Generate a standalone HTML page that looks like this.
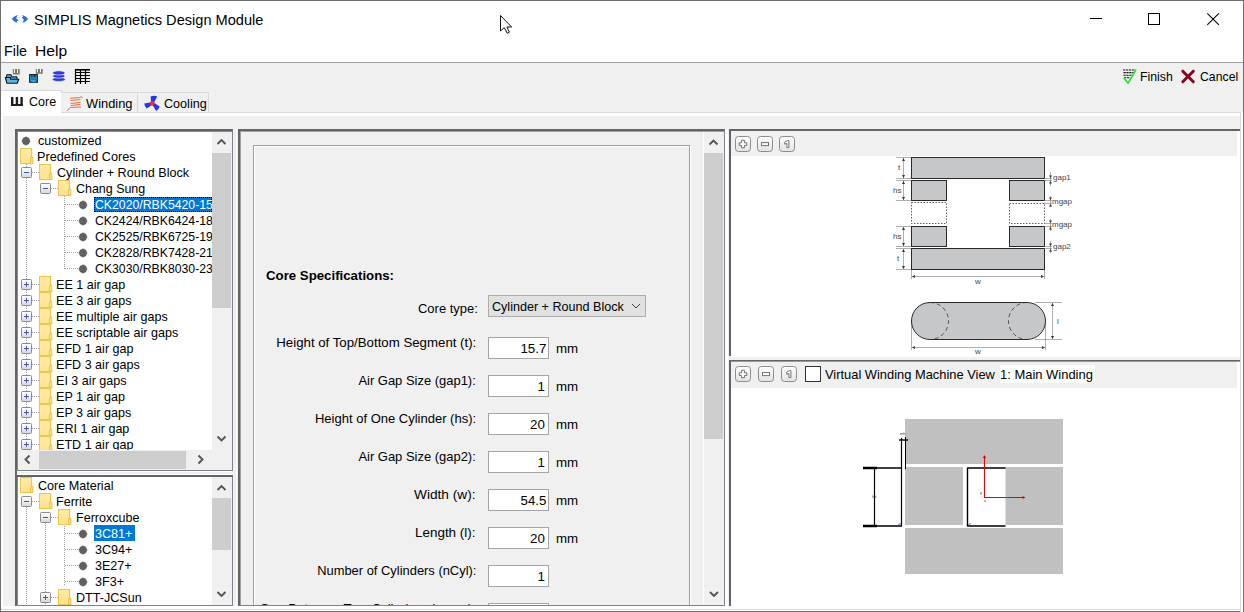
<!DOCTYPE html>
<html><head><meta charset="utf-8">
<style>
*{margin:0;padding:0;box-sizing:border-box}
html,body{width:1244px;height:612px;overflow:hidden;background:#f0f0f0;font-family:"Liberation Sans",sans-serif;color:#000}
.a{position:absolute}
.t{position:absolute;white-space:nowrap;line-height:1}
svg{position:absolute;overflow:visible}
</style></head><body>
<div class="a" style="left:0px;top:0px;width:1244px;height:612px;border:1px solid #6e6e6e;background:#f0f0f0"></div>
<div class="a" style="left:1px;top:1px;width:1242px;height:61px;background:#fff"></div>
<div class="a" style="left:1px;top:62px;width:1242px;height:1px;background:#a0a0a0"></div>
<svg style="left:0;top:0" width="40" height="40">
<path d="M17.8 15 C15 16 12.5 17.5 11.9 19 C12.5 20.5 15 22 17.8 23 L16.6 21.3 L18.8 20.4 L16.2 18.6 L16.9 16.4 Z" fill="#2a6ed8"/>
<path d="M22.1 15 C25 16 27.4 17.5 28 19 C27.4 20.5 25 22 22.1 23 L23.3 21.3 L23.8 19.4 L21.8 17.6 L23 16.4 Z" fill="#2a6ed8"/>
</svg>
<div id="title" class="t" style="left:33.70px;transform-origin:0 0;top:12.18px;font-size:15.5px;color:#000;transform:scaleX(0.9409)">SIMPLIS Magnetics Design Module</div>
<div class="a" style="left:1090px;top:18px;width:12px;height:1px;background:#000"></div>
<div class="a" style="left:1148px;top:13px;width:12px;height:12px;border:1px solid #000"></div>
<svg style="left:1207px;top:13px" width="13" height="13" viewBox="0 0 13 13">
<path d="M0.3 0.3 L11.9 11.9 M11.9 0.3 L0.3 11.9" stroke="#000" stroke-width="1.05"/></svg>
<div id="file" class="t" style="left:4.10px;transform-origin:0 0;top:42.58px;font-size:15.5px;color:#000;transform:scaleX(0.9217)">File</div>
<div id="help" class="t" style="left:35.00px;transform-origin:0 0;top:42.58px;font-size:15.5px;color:#000;transform:scaleX(1.0067)">Help</div>
<div id="finish" class="t" style="left:1139.50px;transform-origin:0 0;top:69.90px;font-size:13px;color:#000;transform:scaleX(0.9441)">Finish</div>
<div id="cancel" class="t" style="left:1199.70px;transform-origin:0 0;top:69.90px;font-size:13px;color:#000;transform:scaleX(0.9436)">Cancel</div>
<div class="a" style="left:1px;top:90px;width:61px;height:26px;background:#fff;border-top:1px solid #d9d9d9;border-right:1px solid #d9d9d9"></div>
<div class="a" style="left:61px;top:92px;width:77px;height:21px;background:#f0f0f0;border:1px solid #d9d9d9;border-bottom:none;border-left:none"></div>
<div class="a" style="left:137px;top:92px;width:72px;height:21px;background:#f0f0f0;border:1px solid #d9d9d9;border-bottom:none"></div>
<div class="a" style="left:61px;top:112px;width:1180px;height:1px;background:#d9d9d9"></div>
<div class="a" style="left:1px;top:113px;width:1240px;height:3px;background:#fff"></div>
<div class="a" style="left:1px;top:116px;width:2px;height:493px;background:#fff"></div>
<div class="a" style="left:1px;top:606px;width:1240px;height:3px;background:#fff"></div>
<div class="a" style="left:1px;top:609px;width:1240px;height:1px;background:#d9d9d9"></div>
<div class="a" style="left:1px;top:610px;width:1242px;height:1px;background:#fff"></div>
<div class="a" style="left:236px;top:129px;width:1px;height:477px;background:#fff"></div>
<div class="a" style="left:725px;top:129px;width:3px;height:477px;background:#fff"></div>
<div class="a" style="left:17px;top:471px;width:215px;height:4px;background:#f0f0f0;border-top:1px solid #fff;border-bottom:1px solid #fff"></div>
<div class="a" style="left:15px;top:471px;width:2px;height:4px;background:#646464"></div>
<div class="a" style="left:1240px;top:112px;width:1px;height:500px;background:#d9d9d9"></div>
<div class="a" style="left:1241px;top:112px;width:2px;height:500px;background:#fff"></div>
<div id="tcore" class="t" style="left:28.70px;transform-origin:0 0;top:94.90px;font-size:13px;color:#000;transform:scaleX(0.9630)">Core</div>
<div id="twind" class="t" style="left:86.30px;transform-origin:0 0;top:96.70px;font-size:13px;color:#000;transform:scaleX(0.9891)">Winding</div>
<div id="tcool" class="t" style="left:164.00px;transform-origin:0 0;top:96.70px;font-size:13px;color:#000;transform:scaleX(0.9690)">Cooling</div>
<div class="a" style="left:15px;top:129px;width:218px;height:342px;background:#fff;border-top:2px solid #646464;border-left:2px solid #646464;border-right:1px solid #7c838c;border-bottom:1px solid #7c838c"></div>
<div class="a" style="left:17px;top:131px;width:215px;height:1px;background:#8a8a8a"></div>
<div class="a" style="left:17px;top:131px;width:1px;height:339px;background:#8a8a8a"></div>
<div class="a" style="left:15px;top:475px;width:218px;height:131px;background:#fff;border-top:2px solid #646464;border-left:2px solid #646464;border-right:1px solid #7c838c;border-bottom:1px solid #7c838c"></div>
<div class="a" style="left:17px;top:477px;width:1px;height:128px;background:#8a8a8a"></div>
<div class="a" style="left:238px;top:129px;width:487px;height:477px;background:#f0f0f0;border-top:2px solid #646464;border-left:2px solid #646464;border-right:1px solid #7c838c;border-bottom:1px solid #7c838c"></div>
<div class="a" style="left:240px;top:131px;width:484px;height:1px;background:#a0a0a0"></div>
<div class="a" style="left:240px;top:131px;width:1px;height:474px;background:#a0a0a0"></div>
<div class="a" style="left:731px;top:131px;width:509px;height:226px;background:#fff"></div>
<div class="a" style="left:729px;top:129px;width:511px;height:2px;background:#646464"></div>
<div class="a" style="left:729px;top:129px;width:2px;height:227px;background:#646464"></div>
<div class="a" style="left:731px;top:131px;width:506px;height:25px;background:#f0f0f0"></div>
<div class="a" style="left:729px;top:357px;width:511px;height:3px;background:#f0f0f0"></div>
<div class="a" style="left:731px;top:361px;width:509px;height:248px;background:#fff"></div>
<div class="a" style="left:729px;top:360px;width:511px;height:1px;background:#646464"></div>
<div class="a" style="left:729px;top:361px;width:511px;height:1px;background:#9a9a9a"></div>
<div class="a" style="left:729px;top:360px;width:2px;height:246px;background:#646464"></div>
<div class="a" style="left:731px;top:362px;width:506px;height:26px;background:#f0f0f0"></div>
<svg width="0" height="0" style="left:0;top:0"><defs>
<linearGradient id="fg" x1="0" y1="0" x2="0" y2="1"><stop offset="0" stop-color="#feeaa6"/><stop offset="1" stop-color="#fde38a"/></linearGradient>
<linearGradient id="bg" x1="0" y1="0" x2="0" y2="1"><stop offset="0" stop-color="#ffffff"/><stop offset="1" stop-color="#d8d8d8"/></linearGradient>
<linearGradient id="btn" x1="0" y1="0" x2="0" y2="1"><stop offset="0" stop-color="#ffffff"/><stop offset="1" stop-color="#e2e2e2"/></linearGradient>
</defs></svg>
<div class="a" style="left:18px;top:132px;width:194px;height:318px;overflow:hidden">
<div class="a" style="left:-18px;top:-132px;width:1244px;height:612px">
<div class="a" style="left:26px;top:164px;width:1px;height:286px;background-image:linear-gradient(to bottom,#a0a0a0 50%,transparent 50%);background-size:1px 2px"></div>
<div class="a" style="left:64px;top:196px;width:1px;height:73px;background-image:linear-gradient(to bottom,#a0a0a0 50%,transparent 50%);background-size:1px 2px"></div>
<svg style="left:20.5px;top:135.5px" width="10" height="10" viewBox="0 0 10 10"><circle cx="5" cy="5" r="3.9" fill="#606060"/><path d="M5 0.6 V9.4 M0.6 5 H9.4" stroke="#606060" stroke-width="1.2"/></svg>
<div id="tr1_0" class="t" style="left:37.50px;transform-origin:0 0;top:134.00px;font-size:13px;color:#000;transform:scaleX(0.9662)">customized</div>
<svg style="left:20px;top:148px" width="14" height="16" viewBox="0 0 14 16">
<rect x="0.6" y="0.6" width="11" height="15" fill="#fde694" stroke="#ebc54c" stroke-width="1.1"/>
<rect x="1.2" y="1.2" width="9.8" height="13.8" fill="url(#fg)"/>
<path d="M10.6 15.4 V10.2 Q10.6 9.4 11.5 9.4 H12 Q12.9 9.4 12.9 10.2 V15.4 Z" fill="#fde694" stroke="#ebc54c" stroke-width="1.1"/>
</svg>
<div id="tr1_1" class="t" style="left:37.10px;transform-origin:0 0;top:150.00px;font-size:13px;color:#000;transform:scaleX(0.9740)">Predefined Cores</div>
<svg style="left:21px;top:167px" width="11" height="11" viewBox="0 0 11 11">
<rect x="0.5" y="0.5" width="10" height="10" rx="1" fill="url(#bg)" stroke="#8a8a8a"/>
<path d="M3 5.5 H8" stroke="#3e5aa8" stroke-width="1"/></svg>
<div class="a" style="left:32px;top:172px;width:7px;height:1px;background-image:linear-gradient(to right,#a0a0a0 50%,transparent 50%);background-size:2px 1px"></div>
<svg style="left:39px;top:164px" width="14" height="16" viewBox="0 0 14 16">
<rect x="0.6" y="0.6" width="11" height="15" fill="#fde694" stroke="#ebc54c" stroke-width="1.1"/>
<rect x="1.2" y="1.2" width="9.8" height="13.8" fill="url(#fg)"/>
<path d="M10.6 15.4 V10.2 Q10.6 9.4 11.5 9.4 H12 Q12.9 9.4 12.9 10.2 V15.4 Z" fill="#fde694" stroke="#ebc54c" stroke-width="1.1"/>
</svg>
<div id="tr1_2" class="t" style="left:57.30px;transform-origin:0 0;top:166.00px;font-size:13px;color:#000;transform:scaleX(0.9696)">Cylinder + Round Block</div>
<svg style="left:40px;top:183px" width="11" height="11" viewBox="0 0 11 11">
<rect x="0.5" y="0.5" width="10" height="10" rx="1" fill="url(#bg)" stroke="#8a8a8a"/>
<path d="M3 5.5 H8" stroke="#3e5aa8" stroke-width="1"/></svg>
<div class="a" style="left:51px;top:188px;width:7px;height:1px;background-image:linear-gradient(to right,#a0a0a0 50%,transparent 50%);background-size:2px 1px"></div>
<svg style="left:58px;top:180px" width="14" height="16" viewBox="0 0 14 16">
<rect x="0.6" y="0.6" width="11" height="15" fill="#fde694" stroke="#ebc54c" stroke-width="1.1"/>
<rect x="1.2" y="1.2" width="9.8" height="13.8" fill="url(#fg)"/>
<path d="M10.6 15.4 V10.2 Q10.6 9.4 11.5 9.4 H12 Q12.9 9.4 12.9 10.2 V15.4 Z" fill="#fde694" stroke="#ebc54c" stroke-width="1.1"/>
</svg>
<div id="tr1_3" class="t" style="left:75.50px;transform-origin:0 0;top:182.00px;font-size:13px;color:#000;transform:scaleX(0.9577)">Chang Sung</div>
<div class="a" style="left:94px;top:197px;width:118px;height:15px;background:#0078d7;outline:1px dotted #000;outline-offset:-1px"></div>
<div class="a" style="left:65px;top:204px;width:13px;height:1px;background-image:linear-gradient(to right,#a0a0a0 50%,transparent 50%);background-size:2px 1px"></div>
<svg style="left:77.6px;top:199.5px" width="10" height="10" viewBox="0 0 10 10"><circle cx="5" cy="5" r="3.9" fill="#606060"/><path d="M5 0.6 V9.4 M0.6 5 H9.4" stroke="#606060" stroke-width="1.2"/></svg>
<div id="tr1_4" class="t" style="left:95.10px;transform-origin:0 0;top:198.00px;font-size:13px;color:#fff;transform:scaleX(0.9430)">CK2020/RBK5420-15</div>
<div class="a" style="left:65px;top:220px;width:13px;height:1px;background-image:linear-gradient(to right,#a0a0a0 50%,transparent 50%);background-size:2px 1px"></div>
<svg style="left:77.6px;top:215.5px" width="10" height="10" viewBox="0 0 10 10"><circle cx="5" cy="5" r="3.9" fill="#606060"/><path d="M5 0.6 V9.4 M0.6 5 H9.4" stroke="#606060" stroke-width="1.2"/></svg>
<div id="tr1_5" class="t" style="left:95.10px;transform-origin:0 0;top:214.00px;font-size:13px;color:#000;transform:scaleX(0.9430)">CK2424/RBK6424-18</div>
<div class="a" style="left:65px;top:236px;width:13px;height:1px;background-image:linear-gradient(to right,#a0a0a0 50%,transparent 50%);background-size:2px 1px"></div>
<svg style="left:77.6px;top:231.5px" width="10" height="10" viewBox="0 0 10 10"><circle cx="5" cy="5" r="3.9" fill="#606060"/><path d="M5 0.6 V9.4 M0.6 5 H9.4" stroke="#606060" stroke-width="1.2"/></svg>
<div id="tr1_6" class="t" style="left:95.10px;transform-origin:0 0;top:230.00px;font-size:13px;color:#000;transform:scaleX(0.9430)">CK2525/RBK6725-19</div>
<div class="a" style="left:65px;top:252px;width:13px;height:1px;background-image:linear-gradient(to right,#a0a0a0 50%,transparent 50%);background-size:2px 1px"></div>
<svg style="left:77.6px;top:247.5px" width="10" height="10" viewBox="0 0 10 10"><circle cx="5" cy="5" r="3.9" fill="#606060"/><path d="M5 0.6 V9.4 M0.6 5 H9.4" stroke="#606060" stroke-width="1.2"/></svg>
<div id="tr1_7" class="t" style="left:95.10px;transform-origin:0 0;top:246.00px;font-size:13px;color:#000;transform:scaleX(0.9430)">CK2828/RBK7428-21</div>
<div class="a" style="left:65px;top:268px;width:13px;height:1px;background-image:linear-gradient(to right,#a0a0a0 50%,transparent 50%);background-size:2px 1px"></div>
<svg style="left:77.6px;top:263.5px" width="10" height="10" viewBox="0 0 10 10"><circle cx="5" cy="5" r="3.9" fill="#606060"/><path d="M5 0.6 V9.4 M0.6 5 H9.4" stroke="#606060" stroke-width="1.2"/></svg>
<div id="tr1_8" class="t" style="left:95.10px;transform-origin:0 0;top:262.00px;font-size:13px;color:#000;transform:scaleX(0.9430)">CK3030/RBK8030-23</div>
<svg style="left:21px;top:279px" width="11" height="11" viewBox="0 0 11 11">
<rect x="0.5" y="0.5" width="10" height="10" rx="1" fill="url(#bg)" stroke="#8a8a8a"/>
<path d="M3 5.5 H8" stroke="#3e5aa8" stroke-width="1"/><path d="M5.5 3 V8" stroke="#3e5aa8" stroke-width="1"/></svg>
<div class="a" style="left:32px;top:284px;width:7px;height:1px;background-image:linear-gradient(to right,#a0a0a0 50%,transparent 50%);background-size:2px 1px"></div>
<svg style="left:39px;top:276px" width="14" height="16" viewBox="0 0 14 16">
<rect x="0.6" y="0.6" width="11" height="15" fill="#fde694" stroke="#ebc54c" stroke-width="1.1"/>
<rect x="1.2" y="1.2" width="9.8" height="13.8" fill="url(#fg)"/>
<path d="M10.6 15.4 V10.2 Q10.6 9.4 11.5 9.4 H12 Q12.9 9.4 12.9 10.2 V15.4 Z" fill="#fde694" stroke="#ebc54c" stroke-width="1.1"/>
</svg>
<div id="tr1_9" class="t" style="left:56.10px;transform-origin:0 0;top:278.00px;font-size:13px;color:#000;transform:scaleX(0.9669)">EE 1 air gap</div>
<svg style="left:21px;top:295px" width="11" height="11" viewBox="0 0 11 11">
<rect x="0.5" y="0.5" width="10" height="10" rx="1" fill="url(#bg)" stroke="#8a8a8a"/>
<path d="M3 5.5 H8" stroke="#3e5aa8" stroke-width="1"/><path d="M5.5 3 V8" stroke="#3e5aa8" stroke-width="1"/></svg>
<div class="a" style="left:32px;top:300px;width:7px;height:1px;background-image:linear-gradient(to right,#a0a0a0 50%,transparent 50%);background-size:2px 1px"></div>
<svg style="left:39px;top:292px" width="14" height="16" viewBox="0 0 14 16">
<rect x="0.6" y="0.6" width="11" height="15" fill="#fde694" stroke="#ebc54c" stroke-width="1.1"/>
<rect x="1.2" y="1.2" width="9.8" height="13.8" fill="url(#fg)"/>
<path d="M10.6 15.4 V10.2 Q10.6 9.4 11.5 9.4 H12 Q12.9 9.4 12.9 10.2 V15.4 Z" fill="#fde694" stroke="#ebc54c" stroke-width="1.1"/>
</svg>
<div id="tr1_10" class="t" style="left:56.10px;transform-origin:0 0;top:294.00px;font-size:13px;color:#000;transform:scaleX(0.9669)">EE 3 air gaps</div>
<svg style="left:21px;top:311px" width="11" height="11" viewBox="0 0 11 11">
<rect x="0.5" y="0.5" width="10" height="10" rx="1" fill="url(#bg)" stroke="#8a8a8a"/>
<path d="M3 5.5 H8" stroke="#3e5aa8" stroke-width="1"/><path d="M5.5 3 V8" stroke="#3e5aa8" stroke-width="1"/></svg>
<div class="a" style="left:32px;top:316px;width:7px;height:1px;background-image:linear-gradient(to right,#a0a0a0 50%,transparent 50%);background-size:2px 1px"></div>
<svg style="left:39px;top:308px" width="14" height="16" viewBox="0 0 14 16">
<rect x="0.6" y="0.6" width="11" height="15" fill="#fde694" stroke="#ebc54c" stroke-width="1.1"/>
<rect x="1.2" y="1.2" width="9.8" height="13.8" fill="url(#fg)"/>
<path d="M10.6 15.4 V10.2 Q10.6 9.4 11.5 9.4 H12 Q12.9 9.4 12.9 10.2 V15.4 Z" fill="#fde694" stroke="#ebc54c" stroke-width="1.1"/>
</svg>
<div id="tr1_11" class="t" style="left:56.10px;transform-origin:0 0;top:310.00px;font-size:13px;color:#000;transform:scaleX(0.9669)">EE multiple air gaps</div>
<svg style="left:21px;top:327px" width="11" height="11" viewBox="0 0 11 11">
<rect x="0.5" y="0.5" width="10" height="10" rx="1" fill="url(#bg)" stroke="#8a8a8a"/>
<path d="M3 5.5 H8" stroke="#3e5aa8" stroke-width="1"/><path d="M5.5 3 V8" stroke="#3e5aa8" stroke-width="1"/></svg>
<div class="a" style="left:32px;top:332px;width:7px;height:1px;background-image:linear-gradient(to right,#a0a0a0 50%,transparent 50%);background-size:2px 1px"></div>
<svg style="left:39px;top:324px" width="14" height="16" viewBox="0 0 14 16">
<rect x="0.6" y="0.6" width="11" height="15" fill="#fde694" stroke="#ebc54c" stroke-width="1.1"/>
<rect x="1.2" y="1.2" width="9.8" height="13.8" fill="url(#fg)"/>
<path d="M10.6 15.4 V10.2 Q10.6 9.4 11.5 9.4 H12 Q12.9 9.4 12.9 10.2 V15.4 Z" fill="#fde694" stroke="#ebc54c" stroke-width="1.1"/>
</svg>
<div id="tr1_12" class="t" style="left:56.10px;transform-origin:0 0;top:326.00px;font-size:13px;color:#000;transform:scaleX(0.9669)">EE scriptable air gaps</div>
<svg style="left:21px;top:343px" width="11" height="11" viewBox="0 0 11 11">
<rect x="0.5" y="0.5" width="10" height="10" rx="1" fill="url(#bg)" stroke="#8a8a8a"/>
<path d="M3 5.5 H8" stroke="#3e5aa8" stroke-width="1"/><path d="M5.5 3 V8" stroke="#3e5aa8" stroke-width="1"/></svg>
<div class="a" style="left:32px;top:348px;width:7px;height:1px;background-image:linear-gradient(to right,#a0a0a0 50%,transparent 50%);background-size:2px 1px"></div>
<svg style="left:39px;top:340px" width="14" height="16" viewBox="0 0 14 16">
<rect x="0.6" y="0.6" width="11" height="15" fill="#fde694" stroke="#ebc54c" stroke-width="1.1"/>
<rect x="1.2" y="1.2" width="9.8" height="13.8" fill="url(#fg)"/>
<path d="M10.6 15.4 V10.2 Q10.6 9.4 11.5 9.4 H12 Q12.9 9.4 12.9 10.2 V15.4 Z" fill="#fde694" stroke="#ebc54c" stroke-width="1.1"/>
</svg>
<div id="tr1_13" class="t" style="left:56.10px;transform-origin:0 0;top:342.00px;font-size:13px;color:#000;transform:scaleX(0.9669)">EFD 1 air gap</div>
<svg style="left:21px;top:359px" width="11" height="11" viewBox="0 0 11 11">
<rect x="0.5" y="0.5" width="10" height="10" rx="1" fill="url(#bg)" stroke="#8a8a8a"/>
<path d="M3 5.5 H8" stroke="#3e5aa8" stroke-width="1"/><path d="M5.5 3 V8" stroke="#3e5aa8" stroke-width="1"/></svg>
<div class="a" style="left:32px;top:364px;width:7px;height:1px;background-image:linear-gradient(to right,#a0a0a0 50%,transparent 50%);background-size:2px 1px"></div>
<svg style="left:39px;top:356px" width="14" height="16" viewBox="0 0 14 16">
<rect x="0.6" y="0.6" width="11" height="15" fill="#fde694" stroke="#ebc54c" stroke-width="1.1"/>
<rect x="1.2" y="1.2" width="9.8" height="13.8" fill="url(#fg)"/>
<path d="M10.6 15.4 V10.2 Q10.6 9.4 11.5 9.4 H12 Q12.9 9.4 12.9 10.2 V15.4 Z" fill="#fde694" stroke="#ebc54c" stroke-width="1.1"/>
</svg>
<div id="tr1_14" class="t" style="left:56.10px;transform-origin:0 0;top:358.00px;font-size:13px;color:#000;transform:scaleX(0.9669)">EFD 3 air gaps</div>
<svg style="left:21px;top:375px" width="11" height="11" viewBox="0 0 11 11">
<rect x="0.5" y="0.5" width="10" height="10" rx="1" fill="url(#bg)" stroke="#8a8a8a"/>
<path d="M3 5.5 H8" stroke="#3e5aa8" stroke-width="1"/><path d="M5.5 3 V8" stroke="#3e5aa8" stroke-width="1"/></svg>
<div class="a" style="left:32px;top:380px;width:7px;height:1px;background-image:linear-gradient(to right,#a0a0a0 50%,transparent 50%);background-size:2px 1px"></div>
<svg style="left:39px;top:372px" width="14" height="16" viewBox="0 0 14 16">
<rect x="0.6" y="0.6" width="11" height="15" fill="#fde694" stroke="#ebc54c" stroke-width="1.1"/>
<rect x="1.2" y="1.2" width="9.8" height="13.8" fill="url(#fg)"/>
<path d="M10.6 15.4 V10.2 Q10.6 9.4 11.5 9.4 H12 Q12.9 9.4 12.9 10.2 V15.4 Z" fill="#fde694" stroke="#ebc54c" stroke-width="1.1"/>
</svg>
<div id="tr1_15" class="t" style="left:56.10px;transform-origin:0 0;top:374.00px;font-size:13px;color:#000;transform:scaleX(0.9669)">EI 3 air gaps</div>
<svg style="left:21px;top:391px" width="11" height="11" viewBox="0 0 11 11">
<rect x="0.5" y="0.5" width="10" height="10" rx="1" fill="url(#bg)" stroke="#8a8a8a"/>
<path d="M3 5.5 H8" stroke="#3e5aa8" stroke-width="1"/><path d="M5.5 3 V8" stroke="#3e5aa8" stroke-width="1"/></svg>
<div class="a" style="left:32px;top:396px;width:7px;height:1px;background-image:linear-gradient(to right,#a0a0a0 50%,transparent 50%);background-size:2px 1px"></div>
<svg style="left:39px;top:388px" width="14" height="16" viewBox="0 0 14 16">
<rect x="0.6" y="0.6" width="11" height="15" fill="#fde694" stroke="#ebc54c" stroke-width="1.1"/>
<rect x="1.2" y="1.2" width="9.8" height="13.8" fill="url(#fg)"/>
<path d="M10.6 15.4 V10.2 Q10.6 9.4 11.5 9.4 H12 Q12.9 9.4 12.9 10.2 V15.4 Z" fill="#fde694" stroke="#ebc54c" stroke-width="1.1"/>
</svg>
<div id="tr1_16" class="t" style="left:56.10px;transform-origin:0 0;top:390.00px;font-size:13px;color:#000;transform:scaleX(0.9669)">EP 1 air gap</div>
<svg style="left:21px;top:407px" width="11" height="11" viewBox="0 0 11 11">
<rect x="0.5" y="0.5" width="10" height="10" rx="1" fill="url(#bg)" stroke="#8a8a8a"/>
<path d="M3 5.5 H8" stroke="#3e5aa8" stroke-width="1"/><path d="M5.5 3 V8" stroke="#3e5aa8" stroke-width="1"/></svg>
<div class="a" style="left:32px;top:412px;width:7px;height:1px;background-image:linear-gradient(to right,#a0a0a0 50%,transparent 50%);background-size:2px 1px"></div>
<svg style="left:39px;top:404px" width="14" height="16" viewBox="0 0 14 16">
<rect x="0.6" y="0.6" width="11" height="15" fill="#fde694" stroke="#ebc54c" stroke-width="1.1"/>
<rect x="1.2" y="1.2" width="9.8" height="13.8" fill="url(#fg)"/>
<path d="M10.6 15.4 V10.2 Q10.6 9.4 11.5 9.4 H12 Q12.9 9.4 12.9 10.2 V15.4 Z" fill="#fde694" stroke="#ebc54c" stroke-width="1.1"/>
</svg>
<div id="tr1_17" class="t" style="left:56.10px;transform-origin:0 0;top:406.00px;font-size:13px;color:#000;transform:scaleX(0.9669)">EP 3 air gaps</div>
<svg style="left:21px;top:423px" width="11" height="11" viewBox="0 0 11 11">
<rect x="0.5" y="0.5" width="10" height="10" rx="1" fill="url(#bg)" stroke="#8a8a8a"/>
<path d="M3 5.5 H8" stroke="#3e5aa8" stroke-width="1"/><path d="M5.5 3 V8" stroke="#3e5aa8" stroke-width="1"/></svg>
<div class="a" style="left:32px;top:428px;width:7px;height:1px;background-image:linear-gradient(to right,#a0a0a0 50%,transparent 50%);background-size:2px 1px"></div>
<svg style="left:39px;top:420px" width="14" height="16" viewBox="0 0 14 16">
<rect x="0.6" y="0.6" width="11" height="15" fill="#fde694" stroke="#ebc54c" stroke-width="1.1"/>
<rect x="1.2" y="1.2" width="9.8" height="13.8" fill="url(#fg)"/>
<path d="M10.6 15.4 V10.2 Q10.6 9.4 11.5 9.4 H12 Q12.9 9.4 12.9 10.2 V15.4 Z" fill="#fde694" stroke="#ebc54c" stroke-width="1.1"/>
</svg>
<div id="tr1_18" class="t" style="left:56.10px;transform-origin:0 0;top:422.00px;font-size:13px;color:#000;transform:scaleX(0.9669)">ERI 1 air gap</div>
<svg style="left:21px;top:439px" width="11" height="11" viewBox="0 0 11 11">
<rect x="0.5" y="0.5" width="10" height="10" rx="1" fill="url(#bg)" stroke="#8a8a8a"/>
<path d="M3 5.5 H8" stroke="#3e5aa8" stroke-width="1"/><path d="M5.5 3 V8" stroke="#3e5aa8" stroke-width="1"/></svg>
<div class="a" style="left:32px;top:444px;width:7px;height:1px;background-image:linear-gradient(to right,#a0a0a0 50%,transparent 50%);background-size:2px 1px"></div>
<svg style="left:39px;top:436px" width="14" height="16" viewBox="0 0 14 16">
<rect x="0.6" y="0.6" width="11" height="15" fill="#fde694" stroke="#ebc54c" stroke-width="1.1"/>
<rect x="1.2" y="1.2" width="9.8" height="13.8" fill="url(#fg)"/>
<path d="M10.6 15.4 V10.2 Q10.6 9.4 11.5 9.4 H12 Q12.9 9.4 12.9 10.2 V15.4 Z" fill="#fde694" stroke="#ebc54c" stroke-width="1.1"/>
</svg>
<div id="tr1_19" class="t" style="left:56.10px;transform-origin:0 0;top:438.00px;font-size:13px;color:#000;transform:scaleX(0.9669)">ETD 1 air gap</div>
</div></div>
<div class="a" style="left:212px;top:132px;width:20px;height:318px;background:#f0f0f0"></div>
<div class="a" style="left:212px;top:153px;width:19px;height:155px;background:#cdcdcd"></div>
<div class="a" style="left:18px;top:450px;width:194px;height:20px;background:#f0f0f0"></div>
<div class="a" style="left:39px;top:451px;width:147px;height:18px;background:#cdcdcd"></div>
<div class="a" style="left:212px;top:450px;width:20px;height:20px;background:#f0f0f0"></div>
<svg style="left:0;top:0" width="1244" height="612"><path d="M217.5 144 L221.5 140 L225.5 144" fill="none" stroke="#555" stroke-width="1.9"/></svg>
<svg style="left:0;top:0" width="1244" height="612"><path d="M217.5 436.5 L221.5 440.5 L225.5 436.5" fill="none" stroke="#555" stroke-width="1.9"/></svg>
<svg style="left:0;top:0" width="1244" height="612"><path d="M29.5 455.5 L25.5 459.5 L29.5 463.5" fill="none" stroke="#555" stroke-width="1.9"/></svg>
<svg style="left:0;top:0" width="1244" height="612"><path d="M198.5 455.5 L202.5 459.5 L198.5 463.5" fill="none" stroke="#555" stroke-width="1.9"/></svg>
<div class="a" style="left:18px;top:477px;width:194px;height:128px;overflow:hidden">
<div class="a" style="left:-18px;top:-477px;width:1244px;height:612px">
<div class="a" style="left:26px;top:507px;width:1px;height:105px;background-image:linear-gradient(to bottom,#a0a0a0 50%,transparent 50%);background-size:1px 2px"></div>
<div class="a" style="left:45px;top:523px;width:1px;height:89px;background-image:linear-gradient(to bottom,#a0a0a0 50%,transparent 50%);background-size:1px 2px"></div>
<div class="a" style="left:64px;top:526px;width:1px;height:60px;background-image:linear-gradient(to bottom,#a0a0a0 50%,transparent 50%);background-size:1px 2px"></div>
<svg style="left:20px;top:477px" width="14" height="16" viewBox="0 0 14 16">
<rect x="0.6" y="0.6" width="11" height="15" fill="#fde694" stroke="#ebc54c" stroke-width="1.1"/>
<rect x="1.2" y="1.2" width="9.8" height="13.8" fill="url(#fg)"/>
<path d="M10.6 15.4 V10.2 Q10.6 9.4 11.5 9.4 H12 Q12.9 9.4 12.9 10.2 V15.4 Z" fill="#fde694" stroke="#ebc54c" stroke-width="1.1"/>
</svg>
<div id="tr2_0" class="t" style="left:37.50px;transform-origin:0 0;top:479.00px;font-size:13px;color:#000;transform:scaleX(0.9669)">Core Material</div>
<svg style="left:21px;top:496px" width="11" height="11" viewBox="0 0 11 11">
<rect x="0.5" y="0.5" width="10" height="10" rx="1" fill="url(#bg)" stroke="#8a8a8a"/>
<path d="M3 5.5 H8" stroke="#3e5aa8" stroke-width="1"/></svg>
<div class="a" style="left:32px;top:501px;width:7px;height:1px;background-image:linear-gradient(to right,#a0a0a0 50%,transparent 50%);background-size:2px 1px"></div>
<svg style="left:39px;top:493px" width="14" height="16" viewBox="0 0 14 16">
<rect x="0.6" y="0.6" width="11" height="15" fill="#fde694" stroke="#ebc54c" stroke-width="1.1"/>
<rect x="1.2" y="1.2" width="9.8" height="13.8" fill="url(#fg)"/>
<path d="M10.6 15.4 V10.2 Q10.6 9.4 11.5 9.4 H12 Q12.9 9.4 12.9 10.2 V15.4 Z" fill="#fde694" stroke="#ebc54c" stroke-width="1.1"/>
</svg>
<div id="tr2_1" class="t" style="left:56.30px;transform-origin:0 0;top:495.00px;font-size:13px;color:#000;transform:scaleX(0.9669)">Ferrite</div>
<svg style="left:40px;top:512px" width="11" height="11" viewBox="0 0 11 11">
<rect x="0.5" y="0.5" width="10" height="10" rx="1" fill="url(#bg)" stroke="#8a8a8a"/>
<path d="M3 5.5 H8" stroke="#3e5aa8" stroke-width="1"/></svg>
<div class="a" style="left:51px;top:517px;width:7px;height:1px;background-image:linear-gradient(to right,#a0a0a0 50%,transparent 50%);background-size:2px 1px"></div>
<svg style="left:58px;top:509px" width="14" height="16" viewBox="0 0 14 16">
<rect x="0.6" y="0.6" width="11" height="15" fill="#fde694" stroke="#ebc54c" stroke-width="1.1"/>
<rect x="1.2" y="1.2" width="9.8" height="13.8" fill="url(#fg)"/>
<path d="M10.6 15.4 V10.2 Q10.6 9.4 11.5 9.4 H12 Q12.9 9.4 12.9 10.2 V15.4 Z" fill="#fde694" stroke="#ebc54c" stroke-width="1.1"/>
</svg>
<div id="tr2_2" class="t" style="left:75.50px;transform-origin:0 0;top:511.00px;font-size:13px;color:#000;transform:scaleX(0.9669)">Ferroxcube</div>
<div class="a" style="left:94px;top:525px;width:41px;height:16px;background:#0078d7"></div>
<div class="a" style="left:65px;top:533px;width:13px;height:1px;background-image:linear-gradient(to right,#a0a0a0 50%,transparent 50%);background-size:2px 1px"></div>
<svg style="left:77.6px;top:528.5px" width="10" height="10" viewBox="0 0 10 10"><circle cx="5" cy="5" r="3.9" fill="#606060"/><path d="M5 0.6 V9.4 M0.6 5 H9.4" stroke="#606060" stroke-width="1.2"/></svg>
<div id="tr2_3" class="t" style="left:94.80px;transform-origin:0 0;top:527.00px;font-size:13px;color:#fff;transform:scaleX(0.9669)">3C81+</div>
<div class="a" style="left:65px;top:549px;width:13px;height:1px;background-image:linear-gradient(to right,#a0a0a0 50%,transparent 50%);background-size:2px 1px"></div>
<svg style="left:77.6px;top:544.5px" width="10" height="10" viewBox="0 0 10 10"><circle cx="5" cy="5" r="3.9" fill="#606060"/><path d="M5 0.6 V9.4 M0.6 5 H9.4" stroke="#606060" stroke-width="1.2"/></svg>
<div id="tr2_4" class="t" style="left:94.80px;transform-origin:0 0;top:543.00px;font-size:13px;color:#000;transform:scaleX(0.9669)">3C94+</div>
<div class="a" style="left:65px;top:565px;width:13px;height:1px;background-image:linear-gradient(to right,#a0a0a0 50%,transparent 50%);background-size:2px 1px"></div>
<svg style="left:77.6px;top:560.5px" width="10" height="10" viewBox="0 0 10 10"><circle cx="5" cy="5" r="3.9" fill="#606060"/><path d="M5 0.6 V9.4 M0.6 5 H9.4" stroke="#606060" stroke-width="1.2"/></svg>
<div id="tr2_5" class="t" style="left:94.80px;transform-origin:0 0;top:559.00px;font-size:13px;color:#000;transform:scaleX(0.9669)">3E27+</div>
<div class="a" style="left:65px;top:581px;width:13px;height:1px;background-image:linear-gradient(to right,#a0a0a0 50%,transparent 50%);background-size:2px 1px"></div>
<svg style="left:77.6px;top:576.5px" width="10" height="10" viewBox="0 0 10 10"><circle cx="5" cy="5" r="3.9" fill="#606060"/><path d="M5 0.6 V9.4 M0.6 5 H9.4" stroke="#606060" stroke-width="1.2"/></svg>
<div id="tr2_6" class="t" style="left:94.80px;transform-origin:0 0;top:575.00px;font-size:13px;color:#000;transform:scaleX(0.9669)">3F3+</div>
<svg style="left:40px;top:592px" width="11" height="11" viewBox="0 0 11 11">
<rect x="0.5" y="0.5" width="10" height="10" rx="1" fill="url(#bg)" stroke="#8a8a8a"/>
<path d="M3 5.5 H8" stroke="#3e5aa8" stroke-width="1"/><path d="M5.5 3 V8" stroke="#3e5aa8" stroke-width="1"/></svg>
<div class="a" style="left:51px;top:597px;width:7px;height:1px;background-image:linear-gradient(to right,#a0a0a0 50%,transparent 50%);background-size:2px 1px"></div>
<svg style="left:58px;top:589px" width="14" height="16" viewBox="0 0 14 16">
<rect x="0.6" y="0.6" width="11" height="15" fill="#fde694" stroke="#ebc54c" stroke-width="1.1"/>
<rect x="1.2" y="1.2" width="9.8" height="13.8" fill="url(#fg)"/>
<path d="M10.6 15.4 V10.2 Q10.6 9.4 11.5 9.4 H12 Q12.9 9.4 12.9 10.2 V15.4 Z" fill="#fde694" stroke="#ebc54c" stroke-width="1.1"/>
</svg>
<div id="tr2_7" class="t" style="left:75.50px;transform-origin:0 0;top:591.00px;font-size:13px;color:#000;transform:scaleX(0.9669)">DTT-JCSun</div>
</div></div>
<div class="a" style="left:212px;top:477px;width:20px;height:128px;background:#f0f0f0"></div>
<div class="a" style="left:212px;top:498px;width:19px;height:52px;background:#cdcdcd"></div>
<svg style="left:0;top:0" width="1244" height="612"><path d="M217.5 490 L221.5 486 L225.5 490" fill="none" stroke="#555" stroke-width="1.9"/></svg>
<svg style="left:0;top:0" width="1244" height="612"><path d="M217.5 592 L221.5 596 L225.5 592" fill="none" stroke="#555" stroke-width="1.9"/></svg>
<div class="a" style="left:241px;top:132px;width:462px;height:473px;overflow:hidden">
<div class="a" style="left:-241px;top:-132px;width:1244px;height:612px">
<div class="a" style="left:253px;top:145px;width:437px;height:500px;border:1px solid #a0a0a0;box-shadow:inset 1px 1px 0 #fff, 1px 1px 0 #fff"></div>
<div id="corespec" class="t" style="left:266.30px;transform-origin:0 0;top:268.80px;font-size:13px;font-weight:bold;color:#000;transform:scaleX(1.0184)">Core Specifications:</div>
<div id="coretype" class="t" style="left:418.00px;transform-origin:0 0;top:302.00px;font-size:13px;color:#000;transform:scaleX(0.9983)">Core type:</div>
<div class="a" style="left:488px;top:295px;width:158px;height:22px;background:#e1e1e1;border:1px solid #adadad"></div>
<div id="combo" class="t" style="left:492.40px;transform-origin:0 0;top:299.90px;font-size:13px;color:#000;transform:scaleX(0.9674)">Cylinder + Round Block</div>
<svg style="left:0;top:0" width="1244" height="612"><path d="M632 304 L636 308 L640 304" fill="none" stroke="#404040" stroke-width="1"/></svg>
<div id="lab0" class="t" style="right:767.90px;transform-origin:100% 0;top:336.00px;font-size:13px;color:#000;transform:scaleX(1.0190)">Height of Top/Bottom Segment (t):</div>
<div class="a" style="left:488px;top:337px;width:61px;height:22px;background:#fff;border:1px solid #a5a5a5"></div>
<div id="val0" class="t" style="right:698.00px;transform-origin:100% 0;top:342.52px;font-size:12.5px;color:#000;transform:scaleX(1.0646)">15.7</div>
<div id="mm0" class="t" style="left:556.10px;transform-origin:0 0;top:342.52px;font-size:12.5px;color:#000;transform:scaleX(1.0646)">mm</div>
<div id="lab1" class="t" style="right:768.10px;transform-origin:100% 0;top:374.00px;font-size:13px;color:#000;transform:scaleX(0.9966)">Air Gap Size (gap1):</div>
<div class="a" style="left:488px;top:375px;width:61px;height:22px;background:#fff;border:1px solid #a5a5a5"></div>
<div id="val1" class="t" style="right:699.00px;transform-origin:100% 0;top:380.52px;font-size:12.5px;color:#000;transform:scaleX(1.0646)">1</div>
<div id="mm1" class="t" style="left:556.10px;transform-origin:0 0;top:380.52px;font-size:12.5px;color:#000;transform:scaleX(1.0646)">mm</div>
<div id="lab2" class="t" style="right:767.90px;transform-origin:100% 0;top:412.00px;font-size:13px;color:#000;transform:scaleX(1.0000)">Height of One Cylinder (hs):</div>
<div class="a" style="left:488px;top:413px;width:61px;height:22px;background:#fff;border:1px solid #a5a5a5"></div>
<div id="val2" class="t" style="right:699.00px;transform-origin:100% 0;top:418.52px;font-size:12.5px;color:#000;transform:scaleX(1.0646)">20</div>
<div id="mm2" class="t" style="left:556.10px;transform-origin:0 0;top:418.52px;font-size:12.5px;color:#000;transform:scaleX(1.0646)">mm</div>
<div id="lab3" class="t" style="right:768.10px;transform-origin:100% 0;top:450.00px;font-size:13px;color:#000;transform:scaleX(0.9966)">Air Gap Size (gap2):</div>
<div class="a" style="left:488px;top:451px;width:61px;height:22px;background:#fff;border:1px solid #a5a5a5"></div>
<div id="val3" class="t" style="right:699.00px;transform-origin:100% 0;top:456.52px;font-size:12.5px;color:#000;transform:scaleX(1.0646)">1</div>
<div id="mm3" class="t" style="left:556.10px;transform-origin:0 0;top:456.52px;font-size:12.5px;color:#000;transform:scaleX(1.0646)">mm</div>
<div id="lab4" class="t" style="right:768.90px;transform-origin:100% 0;top:488.00px;font-size:13px;color:#000;transform:scaleX(1.0517)">Width (w):</div>
<div class="a" style="left:488px;top:489px;width:61px;height:22px;background:#fff;border:1px solid #a5a5a5"></div>
<div id="val4" class="t" style="right:698.00px;transform-origin:100% 0;top:494.52px;font-size:12.5px;color:#000;transform:scaleX(1.0609)">54.5</div>
<div id="mm4" class="t" style="left:556.10px;transform-origin:0 0;top:494.52px;font-size:12.5px;color:#000;transform:scaleX(1.0684)">mm</div>
<div id="lab5" class="t" style="right:768.90px;transform-origin:100% 0;top:526.00px;font-size:13px;color:#000;transform:scaleX(1.0351)">Length (l):</div>
<div class="a" style="left:488px;top:527px;width:61px;height:22px;background:#fff;border:1px solid #a5a5a5"></div>
<div id="val5" class="t" style="right:699.00px;transform-origin:100% 0;top:532.52px;font-size:12.5px;color:#000;transform:scaleX(1.0646)">20</div>
<div id="mm5" class="t" style="left:556.10px;transform-origin:0 0;top:532.52px;font-size:12.5px;color:#000;transform:scaleX(1.0646)">mm</div>
<div id="lab6" class="t" style="right:767.90px;transform-origin:100% 0;top:564.00px;font-size:13px;color:#000;transform:scaleX(0.9925)">Number of Cylinders (nCyl):</div>
<div class="a" style="left:488px;top:565px;width:61px;height:22px;background:#fff;border:1px solid #a5a5a5"></div>
<div id="val6" class="t" style="right:699.00px;transform-origin:100% 0;top:570.52px;font-size:12.5px;color:#000;transform:scaleX(1.0646)">1</div>
<div id="lab7" class="t" style="right:767.90px;transform-origin:100% 0;top:602.00px;font-size:13px;color:#000;transform:scaleX(1.0211)">Gap Between Two Cylinders (mgap):</div>
<div class="a" style="left:488px;top:603px;width:61px;height:22px;background:#fff;border:1px solid #a5a5a5"></div>
<div id="val7" class="t" style="right:699.00px;transform-origin:100% 0;top:608.52px;font-size:12.5px;color:#000;transform:scaleX(1.0646)">0</div>
<div id="mm7" class="t" style="left:557.80px;transform-origin:0 0;top:608.52px;font-size:12.5px;color:#000;transform:scaleX(1.0646)">mm</div>
</div></div>
<div class="a" style="left:703px;top:132px;width:1px;height:473px;background:#fff"></div>
<div class="a" style="left:704px;top:132px;width:20px;height:473px;background:#f0f0f0"></div>
<div class="a" style="left:704px;top:153px;width:19px;height:286px;background:#cdcdcd"></div>
<svg style="left:0;top:0" width="1244" height="612"><path d="M709.5 144.5 L713.5 140.5 L717.5 144.5" fill="none" stroke="#555" stroke-width="1.9"/></svg>
<svg style="left:0;top:0" width="1244" height="612"><path d="M710 592 L714 596 L718 592" fill="none" stroke="#555" stroke-width="1.9"/></svg>
<svg style="left:735px;top:136px" width="16" height="16" viewBox="0 0 16 16">
<rect x="0.5" y="0.5" width="15" height="15" rx="3" fill="url(#btn)" stroke="#8c8c8c"/><path d="M6.6 4.2 H9.4 V6.8 H11.8 V9.4 H9.4 V11.8 H6.6 V9.4 H4.2 V6.8 H6.6 Z" fill="#fff" stroke="#707070" stroke-width="1"/></svg>
<svg style="left:757px;top:136px" width="16" height="16" viewBox="0 0 16 16">
<rect x="0.5" y="0.5" width="15" height="15" rx="3" fill="url(#btn)" stroke="#8c8c8c"/><rect x="4.5" y="6.6" width="7" height="3" fill="#fff" stroke="#707070" stroke-width="1"/></svg>
<svg style="left:779px;top:136px" width="16" height="16" viewBox="0 0 16 16">
<rect x="0.5" y="0.5" width="15" height="15" rx="3" fill="url(#btn)" stroke="#8c8c8c"/><path d="M5.7 6.2 L8.3 4.6 H9.9 V11.6 H7.9 V7.4 L5.7 8.2 Z" fill="#fff" stroke="#707070" stroke-width="1" stroke-linejoin="round"/></svg>
<svg style="left:735px;top:366px" width="16" height="16" viewBox="0 0 16 16">
<rect x="0.5" y="0.5" width="15" height="15" rx="3" fill="url(#btn)" stroke="#8c8c8c"/><path d="M6.6 4.2 H9.4 V6.8 H11.8 V9.4 H9.4 V11.8 H6.6 V9.4 H4.2 V6.8 H6.6 Z" fill="#fff" stroke="#707070" stroke-width="1"/></svg>
<svg style="left:758px;top:366px" width="16" height="16" viewBox="0 0 16 16">
<rect x="0.5" y="0.5" width="15" height="15" rx="3" fill="url(#btn)" stroke="#8c8c8c"/><rect x="4.5" y="6.6" width="7" height="3" fill="#fff" stroke="#707070" stroke-width="1"/></svg>
<svg style="left:781px;top:366px" width="16" height="16" viewBox="0 0 16 16">
<rect x="0.5" y="0.5" width="15" height="15" rx="3" fill="url(#btn)" stroke="#8c8c8c"/><path d="M5.7 6.2 L8.3 4.6 H9.9 V11.6 H7.9 V7.4 L5.7 8.2 Z" fill="#fff" stroke="#707070" stroke-width="1" stroke-linejoin="round"/></svg>
<div class="a" style="left:805px;top:366px;width:16px;height:16px;background:#fff;border:1px solid #333"></div>
<div id="vwm" class="t" style="left:824.50px;transform-origin:0 0;top:367.70px;font-size:13px;color:#000;transform:scaleX(0.9906)">Virtual Winding Machine View</div>
<div class="a" style="left:1000px;top:365px;width:95px;height:18px;background:#fff"></div>
<div id="mainw" class="t" style="left:1000.00px;transform-origin:0 0;top:367.60px;font-size:13px;color:#000;transform:scaleX(0.9967)">1: Main Winding</div>
<svg style="left:0;top:0" width="1244" height="612">
<g fill="#c5c7c9" stroke="#2a2a2a" stroke-width="1">
<rect x="911.5" y="157.5" width="133" height="21"/>
<rect x="911.5" y="180.5" width="35" height="20"/>
<rect x="1009.5" y="180.5" width="35" height="20"/>
<rect x="911.5" y="226.5" width="35" height="20"/>
<rect x="1009.5" y="226.5" width="35" height="20"/>
<rect x="911.5" y="248.5" width="133" height="21"/>
</g>
<g fill="none" stroke="#333" stroke-width="0.8" stroke-dasharray="1.5 1.5">
<rect x="911.5" y="202.5" width="35" height="21"/>
<rect x="1009.5" y="203.5" width="35" height="20"/>
</g>
<g stroke="#777" stroke-width="0.6" fill="none">
<path d="M896 157.5 H911 M896 178.5 H911 M896 180.5 H911 M896 200.5 H911 M896 226.5 H911 M896 246.5 H911 M896 248.5 H911 M896 269.5 H911"/>
<path d="M903.5 158 V178 M903.5 181 V200 M903.5 227 V246 M903.5 249 V269"/>
<path d="M1044 178.5 H1052 M1044 180.5 H1052 M1044 200.5 H1052 M1044 203.5 H1052 M1044 223.5 H1052 M1044 226.5 H1052 M1044 246.5 H1052 M1044 248.5 H1052"/>
<path d="M1050.5 172 V186 M1050.5 196 V207 M1050.5 219 V231 M1050.5 241 V253"/>
<path d="M911.5 270 V279 M1044.5 270 V279 M912 276.5 H1044"/>
<path d="M911.5 320 V350 M1045.5 320 V350 M912 347.5 H1045"/>
<path d="M1035 302.5 H1062 M1035 339.5 H1062 M1052.5 303 V339"/>
</g>
<g fill="#333">
<path d="M903.5 158 l-1.5 3 h3z M903.5 178 l-1.5 -3 h3z M903.5 181 l-1.5 3 h3z M903.5 200 l-1.5 -3 h3z M903.5 227 l-1.5 3 h3z M903.5 246 l-1.5 -3 h3z M903.5 249 l-1.5 3 h3z M903.5 269 l-1.5 -3 h3z"/>
<path d="M912 276.5 l3 -1.5 v3z M1044 276.5 l-3 -1.5 v3z M912 347.5 l3 -1.5 v3z M1045 347.5 l-3 -1.5 v3z M1052.5 303 l-1.5 3 h3z M1052.5 339 l-1.5 -3 h3z"/>
<path d="M1050.5 178 l-1.5 -2.5 h3z M1050.5 181 l-1.5 2.5 h3z M1050.5 200 l-1.5 -2.5 h3z M1050.5 204 l-1.5 2.5 h3z M1050.5 223 l-1.5 -2.5 h3z M1050.5 227 l-1.5 2.5 h3z M1050.5 246 l-1.5 -2.5 h3z M1050.5 249 l-1.5 2.5 h3z"/>
</g>
<path d="M930 302.5 H1027 A18.5 18.5 0 0 1 1027 339.5 H930 A18.5 18.5 0 0 1 930 302.5 Z" fill="#c5c7c9" stroke="#2a2a2a" stroke-width="1"/>
<g fill="none" stroke="#333" stroke-width="0.8" stroke-dasharray="4 3">
<path d="M930 302.5 A18.5 18.5 0 0 1 930 339.5"/>
<path d="M1027 302.5 A18.5 18.5 0 0 0 1027 339.5"/>
</g>
<g font-family="Liberation Sans" font-size="8" fill="#444">
<text x="898" y="170">t</text>
<text x="893" y="193">hs</text>
<text x="893" y="239">hs</text>
<text x="897" y="261">t</text>
<text x="975" y="284">w</text>
<text x="1053" y="180">gap1</text>
<text x="1052" y="204">mgap</text>
<text x="1052" y="227">mgap</text>
<text x="1053" y="249">gap2</text>
<text x="1057" y="324">l</text>
<text x="975" y="354">w</text>
</g>
</svg>
<svg style="left:0;top:0" width="1244" height="612">
<g fill="#c0c0c0">
<rect x="905" y="419" width="158" height="45"/>
<rect x="905" y="467" width="58" height="58"/>
<rect x="1005" y="467" width="58" height="58"/>
<rect x="905" y="528" width="158" height="46"/>
</g>
<rect x="967.5" y="467.5" width="38" height="58" fill="#fff"/>
<g stroke="#000" fill="none">
<path d="M967.5 467.5 V526.5 M967.5 468 H1005.5 M967.5 526 H1005.5" stroke-width="1.4"/>
<path d="M863 468 H901.5 M863 526 H901.5" stroke-width="1.4"/>
<path d="M863 468 H877 M863 526 H877" stroke-width="2.4"/>
<path d="M874.5 468 V525" stroke-width="1.2"/>
<path d="M901.5 438 V526.5" stroke-width="1.2"/>
<path d="M905.5 437 V469" stroke-width="1"/>
<path d="M899 440 H908" stroke-width="1.4"/>
</g>
<g stroke="#f00000" fill="none" stroke-width="1.1">
<path d="M984.5 456 V497.5 H1024"/>
</g>
<g fill="#e00000">
<path d="M984.5 455 l-1.6 3 h3.2z M1025.5 497.5 l-3 -1.6 v3.2z"/>
</g>
<path d="M898.5 524.5 L900.8 523.6 M968.5 524.5 L970.8 523.6" stroke="#1e6ee0" stroke-width="1"/>
<g font-family="Liberation Sans" font-size="4" fill="#333">
<text x="980" y="494">y</text><text x="984" y="502">x</text><text x="900" y="435">mh</text><text x="872" y="498">hh</text>
</g>
</svg>
<svg style="left:0;top:0" width="1244" height="612">
<!-- open -->
<g>
<path d="M6.5 79 V75.2 Q6.5 74.7 7 74.7 H11.2 L11.7 76.8 H17 V79" fill="#4aa6d4" stroke="#111" stroke-width="1"/>
<path d="M5.3 77.5 H10.6 V79.3 H18.8 L17.2 83.2 H6.9 Z" fill="#5ab4e0" stroke="#111" stroke-width="1.1" stroke-linejoin="round"/>
<path d="M12.8 69 H19.7 V74.6 H12.8 Z M13.9 69 V73 H15 V69 Z M17 69 V73 H18 V69 Z" fill="#7a7a70" fill-rule="evenodd"/>
</g>
<!-- save -->
<g>
<rect x="29.6" y="74.5" width="7.8" height="7.8" fill="#1e9ad8" stroke="#1a2030" stroke-width="1"/>
<rect x="31.3" y="74.8" width="4.4" height="2.4" fill="#2a2a2a"/>
<rect x="32.5" y="75.3" width="1.2" height="1.3" fill="#aaa"/>
<path d="M31 79.2 H36 V82" fill="none" stroke="#14506e" stroke-width="0.8"/>
<rect x="32" y="79.8" width="3.6" height="2.3" fill="#24a8ee"/>
<path d="M35.8 69 H42.7 V73.8 H35.8 Z M36.9 69 V72.3 H38 V69 Z M40 69 V72.3 H41 V69 Z" fill="#7a7a70" fill-rule="evenodd"/>
</g>
<!-- database -->
<g fill="#2e3ad8" stroke="#f0f0f0" stroke-width="0.7">
<ellipse cx="58.8" cy="79.4" rx="6.5" ry="2.1"/>
<ellipse cx="58.8" cy="76.1" rx="6.3" ry="2"/>
<ellipse cx="58.8" cy="72.9" rx="6.3" ry="2.1"/>
</g>
<!-- grid -->
<g stroke="#000" fill="none">
<path d="M75 69.8 H90" stroke-width="1.6"/>
<path d="M75.5 69 V84 M80.5 69 V84 M85.5 69 V84" stroke-width="1.2"/>
<path d="M75 72.5 H90 M75 75.5 H90 M75 78.5 H90 M75 81.5 H90" stroke-width="1.1"/>
</g>
<!-- finish -->
<g>
<path d="M1123 70 H1135 M1123.5 72.6 H1134 M1123.5 75.2 H1132.5 M1124 77.8 H1130" stroke="#111" stroke-width="1.1" stroke-dasharray="2.2 0.7"/>
<path d="M1123.8 77.8 L1128 83.2 L1136 69.5" fill="none" stroke="#36e036" stroke-width="1.8" stroke-linejoin="round"/>
</g>
<!-- cancel -->
<path d="M1182.8 71.2 L1193.3 81.8 M1193.3 71.2 L1182.8 81.8" stroke="#86081e" stroke-width="3" stroke-linecap="round"/>
<!-- core tab icon -->
<g fill="#1e1e1e">
<rect x="11" y="97" width="2.4" height="9"/>
<rect x="15.7" y="97" width="2.4" height="9"/>
<rect x="20.4" y="97" width="2.4" height="9"/>
<rect x="11" y="104" width="11.8" height="2"/>
</g>
<!-- winding icon -->
<g fill="none" stroke="#ee6a3a" stroke-width="1" stroke-linecap="round">
<path d="M70.5 98.3 L79.5 97.5 Q81 96 82.5 97.5"/>
<path d="M71 100.5 L80 99.5"/>
<path d="M71 103.5 L80 102.5"/>
<path d="M71 105.5 L80 104.5"/>
<path d="M70.5 107.5 L80.5 107"/>
<path d="M67.5 110.5 L69.5 108"/>
</g>
<!-- cooling icon -->
<g fill="#2436f0">
<path d="M151.2 103 L150.6 96.6 Q153.8 95.2 157.2 96.4 L153.6 103.4 Z"/>
<path d="M151.8 102.2 L144.2 103.6 Q144.6 106.6 146.6 108.6 L152.6 104.6 Z"/>
<path d="M152 104.2 L156.2 111 Q158.8 109.4 159.6 106.4 L153.6 102.6 Z"/>
</g>
<circle cx="152.2" cy="103.3" r="2.4" fill="#e83030"/>
</svg>
<svg style="left:0;top:0" width="1244" height="612">
<path d="M500.5 15.5 V31 L504.3 27.6 L507.2 33.3 L509.4 32.2 L506.9 27 H511.6 Z" fill="#fff" stroke="#111" stroke-width="1" stroke-linejoin="round"/>
</svg>
</body></html>
